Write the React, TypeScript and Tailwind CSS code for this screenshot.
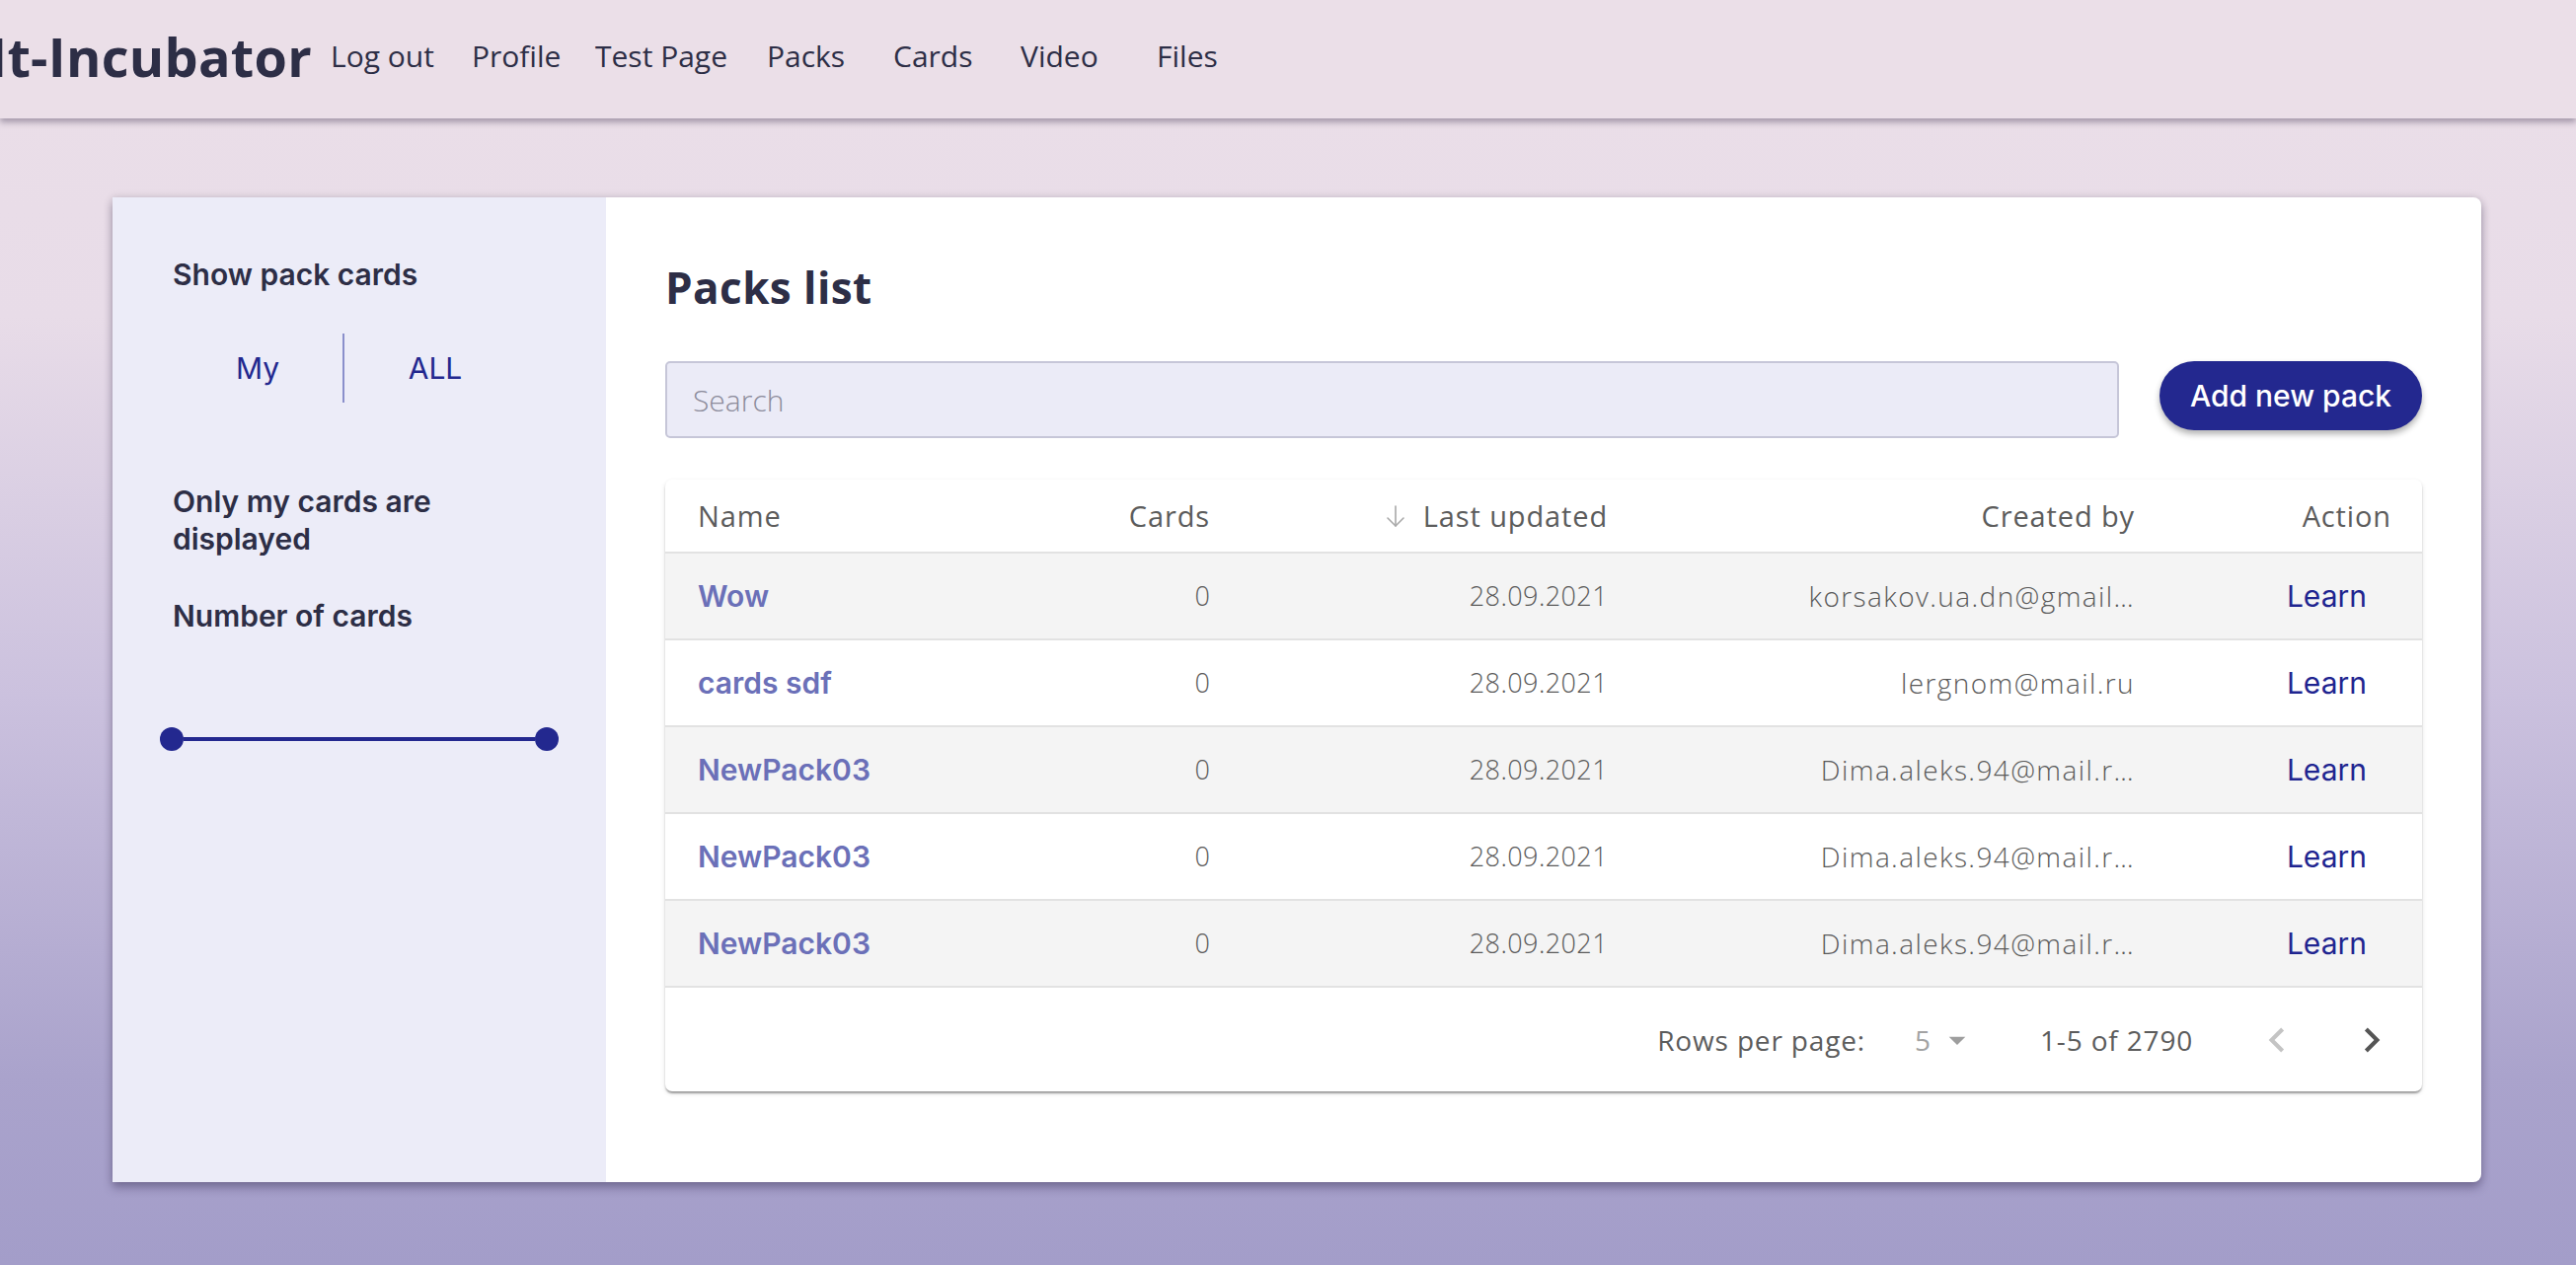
import React from "react";

const navLinks = [
  { label: "Log out", w: "w-[143px]" },
  { label: "Profile", w: "w-[125px]" },
  { label: "Test Page", w: "w-[174px]" },
  { label: "Packs", w: "w-[128px]" },
  { label: "Cards", w: "w-[129px]" },
  { label: "Video", w: "w-[138px]" },
  { label: "Files", w: "w-[100px]" },
];

const packs = [
  { name: "Wow", cards: 0, updated: "28.09.2021", by: "korsakov.ua.dn@gmail…" },
  { name: "cards sdf", cards: 0, updated: "28.09.2021", by: "lergnom@mail.ru" },
  { name: "NewPack03", cards: 0, updated: "28.09.2021", by: "Dima.aleks.94@mail.r…" },
  { name: "NewPack03", cards: 0, updated: "28.09.2021", by: "Dima.aleks.94@mail.r…" },
  { name: "NewPack03", cards: 0, updated: "28.09.2021", by: "Dima.aleks.94@mail.r…" },
];

const rowGrid =
  "grid grid-cols-[294px_225px_403px_534px_260px] items-center pl-[33px] pr-[31px]";

const Header = () => (
  <header className="relative z-10 flex h-[120px] items-center bg-[#ebdfe8] pb-[7px] shadow-[0_4px_6px_rgba(40,30,60,0.35)] font-['Open_Sans',sans-serif] text-[#2d2e46]">
    {/* logo is cut off on the left in the original */}
    <div className="flex w-[316px] justify-end overflow-hidden">
      <span className="whitespace-nowrap text-[54px] font-bold leading-none tracking-[0.005em]">
        It-Incubator
      </span>
    </div>
    <nav className="ml-[19px] flex items-center">
      {navLinks.map((link) => (
        <a key={link.label} className={`${link.w} whitespace-nowrap text-[30px] leading-none`}>
          {link.label}
        </a>
      ))}
    </nav>
  </header>
);

const Sidebar = () => (
  <aside className="w-[500px] shrink-0 bg-[#ececf8] pl-[61px] pt-[60px] font-['Inter',sans-serif] text-[#2d2e46]">
    <h3 className="text-[30px] font-semibold leading-[36px]">Show pack cards</h3>
    <div className="mt-[42px] flex h-[70px] items-center text-[30px] text-[#23288f]">
      <button className="w-[172px] text-center">My</button>
      <div className="h-[70px] w-[2px] bg-[#8a8fcb]" />
      <button className="w-[184px] text-center">ALL</button>
    </div>
    <p className="mt-[81px] max-w-[300px] text-[30px] font-semibold leading-[38px]">
      Only my cards are displayed
    </p>
    <p className="mt-[40px] text-[30px] font-semibold leading-[38px]">Number of cards</p>
    <div className="-ml-[13px] mt-[94px] flex w-[404px] items-center">
      <div className="h-[24px] w-[24px] rounded-full bg-[#23288f]" />
      <div className="h-[4px] flex-1 bg-[#23288f]" />
      <div className="h-[24px] w-[24px] rounded-full bg-[#23288f]" />
    </div>
  </aside>
);

const SortArrow = () => (
  <svg width="24" height="24" viewBox="0 0 24 24" fill="none" stroke="#a8a8a8" strokeWidth="1.6" strokeLinecap="round" strokeLinejoin="round">
    <line x1="12" y1="2" x2="12" y2="22" />
    <polyline points="4,14 12,22 20,14" />
  </svg>
);

const cellText = "text-right font-['Open_Sans',sans-serif] text-[27px] font-light text-[#5a5a5a]";

const PacksTable = () => (
  <div className="mt-[42px] overflow-hidden rounded-[7px] bg-white shadow-[0_3px_2px_-1px_rgba(0,0,0,0.22),0_2px_2px_0_rgba(0,0,0,0.14),0_2px_5px_0_rgba(0,0,0,0.12)]">
    <div className={`${rowGrid} h-[75px] border-b-2 border-[#e2e2e2] font-['Open_Sans',sans-serif] text-[29px] font-medium tracking-[0.03em] text-[#5c5c5c]`}>
      <div>Name</div>
      <div className="text-right">Cards</div>
      <div className="flex items-center justify-end gap-[16px]">
        <SortArrow />
        <span>Last updated</span>
      </div>
      <div className="text-right">Created by</div>
      <div className="text-right">Action</div>
    </div>
    {packs.map((p, i) => (
      <div
        key={i}
        className={`${rowGrid} h-[88px] border-b-2 border-[#e2e2e2] ${i % 2 === 0 ? "bg-[#f4f4f4]" : "bg-white"}`}
      >
        <div className="font-['Inter',sans-serif] text-[30px] font-semibold text-[#6b70b8]">{p.name}</div>
        <div className={cellText}>{p.cards}</div>
        <div className={`${cellText} tracking-[0.015em]`}>{p.updated}</div>
        <div className={`${cellText} whitespace-nowrap text-[28px] tracking-[0.05em]`}>{p.by}</div>
        <div className="pr-[25px] text-right font-['Inter',sans-serif] text-[30px] text-[#1f2590]">Learn</div>
      </div>
    ))}
    <div className="flex h-[105px] items-center justify-end pr-[26px] font-['Open_Sans',sans-serif] text-[28px] tracking-[0.03em] text-[#5c5c5c]">
      <span className="mr-[50px]">Rows per page:</span>
      <div className="flex w-[127px] items-center text-[#a3a3a3]">
        <span>5</span>
        <svg className="ml-[6px]" width="40" height="40" viewBox="0 0 24 24" fill="#9e9e9e">
          <path d="M7 10l5 5 5-5z" />
        </svg>
      </div>
      <span className="w-[215px]">1-5 of 2790</span>
      <svg width="50" height="50" viewBox="0 0 24 24" fill="#c4c4c4">
        <path d="M15.41 16.59L10.83 12l4.58-4.59L14 6l-6 6 6 6 1.41-1.41z" />
      </svg>
      <svg className="ml-[46px]" width="50" height="50" viewBox="0 0 24 24" fill="#555555">
        <path d="M8.59 16.59L13.17 12 8.59 7.41 10 6l6 6-6 6-1.41-1.41z" />
      </svg>
    </div>
  </div>
);

export default function App() {
  return (
    <div className="min-h-screen w-full bg-[linear-gradient(180deg,#ebdfe8_0%,#e8dce8_25%,#cbc1de_55%,#aaa3cc_85%,#a39dc9_100%)]">
      <Header />
      <main className="ml-[114px] mt-[80px] flex h-[998px] w-[2400px] overflow-hidden rounded-r-[8px] bg-white shadow-[0_6px_10px_rgba(40,30,70,0.35),0_0_8px_rgba(0,0,0,0.12)]">
        <Sidebar />
        <section className="flex-1 px-[60px] pt-[65px]">
          <h1 className="font-['Open_Sans',sans-serif] text-[44px] font-bold leading-[52px] tracking-[0.01em] text-[#2d2e46]">
            Packs list
          </h1>
          <div className="mt-[49px] flex items-start gap-[41px]">
            <input
              placeholder="Search"
              className="h-[78px] flex-1 rounded-[5px] border-2 border-[#c6c6d8] bg-[#ebebf7] px-[26px] font-['Open_Sans',sans-serif] text-[30px] font-light outline-none placeholder:text-[#8c8b9b]"
            />
            <button className="h-[70px] w-[266px] rounded-full bg-[#23288f] font-['Inter',sans-serif] text-[30px] font-medium text-white shadow-[0_4px_6px_rgba(0,0,0,0.3)]">
              Add new pack
            </button>
          </div>
          <PacksTable />
        </section>
      </main>
    </div>
  );
}
